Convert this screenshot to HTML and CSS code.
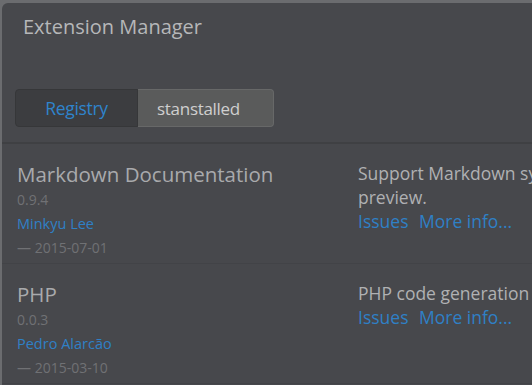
FILE: index.html
```html
<!DOCTYPE html>
<html lang="en">
<head>
    <meta charset="UTF-8">
    <title>Extension Manager</title>
    <link rel="stylesheet" href="styles.css">
</head>
<body>

    <div class="dialog">
        <div class="dialog-header">
            <h1>Extension Manager</h1>
            <div class="tabs">
                <a class="tab active">Registry</a>
                <a class="tab">stanstalled</a>
            </div>
        </div>

        <div class="extension-list">
            <div class="extension">
                <div class="ext-info">
                    <div class="ext-name">Markdown Documentation</div>
                    <div class="ext-version">0.9.4</div>
                    <a class="ext-author">Minkyu Lee</a>
                    <div class="ext-date">&mdash; 2015-07-01</div>
                </div>
                <div class="ext-desc">
                    <p>Support Markdown syntax highlighting and<br>preview.</p>
                    <div class="ext-links">
                        <a>Issues</a>
                        <a>More info...</a>
                    </div>
                </div>
            </div>

            <div class="extension">
                <div class="ext-info">
                    <div class="ext-name">PHP</div>
                    <div class="ext-version">0.0.3</div>
                    <a class="ext-author">Pedro Alarcão</a>
                    <div class="ext-date">&mdash; 2015-03-10</div>
                </div>
                <div class="ext-desc">
                    <p>PHP code generation for StarUML</p>
                    <div class="ext-links">
                        <a>Issues</a>
                        <a>More info...</a>
                    </div>
                </div>
            </div>
        </div>
    </div>

</body>
</html>
```

FILE: styles.css
```css
* {
    box-sizing: border-box;
    margin: 0;
    padding: 0;
}

body {
    font-family: 'Open Sans', sans-serif;
    background-color: #6b6c6f;
    width: 532px;
    height: 385px;
    overflow: hidden;
}

.dialog {
    margin: 3px 0 0 2px;
    height: 382px;
    background-color: #47484c;
    border-top-left-radius: 6px;
    overflow: hidden;
}

.dialog-header {
    padding: 11px 13px 0 13px;
    height: 141px;
    border-bottom: 2px solid #3f4043;
}

h1 {
    font-size: 20px;
    font-weight: 400;
    color: #b6b7b9;
    margin-left: 8px;
    line-height: 26px;
}

.tabs {
    display: flex;
    margin-top: 49px;
    width: 259px;
    height: 38px;
}

.tab {
    flex: 1;
    display: flex;
    align-items: center;
    justify-content: center;
    font-size: 17px;
    letter-spacing: -0.3px;
    color: #cfcfcf;
    background-color: #5a5b5b;
    border: 1px solid #676868;
    border-left: none;
    border-radius: 0 4px 4px 0;
    padding-right: 14px;
}

.tab.active {
    font-size: 17.5px;
    color: #2f84cc;
    background-color: #3c3d40;
    border: 1px solid #363739;
    border-radius: 4px 0 0 4px;
    padding-right: 0;
}

.extension {
    display: flex;
    height: 120px;
    padding: 18px 0 0 15px;
    border-bottom: 1px solid #424347;
}

.ext-info {
    width: 341px;
    flex-shrink: 0;
    display: flex;
    flex-direction: column;
    line-height: 24px;
}

.ext-name {
    font-size: 20.5px;
    color: #a9aaac;
}

.ext-version {
    margin-top: 2px;
}

.ext-version,
.ext-date {
    font-size: 14px;
    color: #707174;
}

.ext-author {
    font-size: 14.5px;
    color: #2f80c6;
}

.ext-desc {
    width: 380px;
    flex-shrink: 0;
    line-height: 24px;
    font-size: 17.5px;
    color: #b0b1b3;
    white-space: nowrap;
    margin-top: -1px;
}

.ext-links a {
    color: #2f80c6;
    margin-right: 6px;
}
```
